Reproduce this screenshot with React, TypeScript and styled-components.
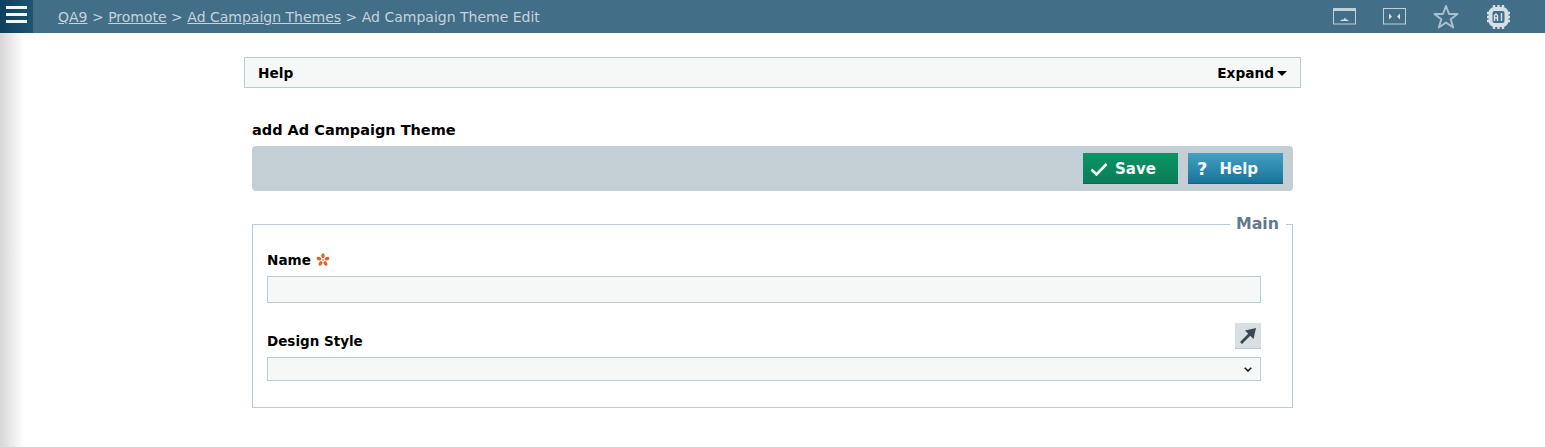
import React from 'react';
import { styled, createGlobalStyle } from 'styled-components';

const GlobalStyle = createGlobalStyle`
  html, body {
    margin: 0;
    padding: 0;
    background: #fff;
    font-family: 'DejaVu Sans', Verdana, sans-serif;
  }
  * {
    box-sizing: border-box;
  }
`;

const Page = styled.div`
  position: relative;
  height: 447px;
  overflow: hidden;

  &::after {
    content: '';
    position: absolute;
    left: 0;
    top: 33px;
    bottom: 0;
    width: 24px;
    background: linear-gradient(to right, #d6d6d6, #ffffff);
  }
`;

const TopBar = styled.header`
  display: flex;
  align-items: center;
  height: 33px;
  background: #436e87;
`;

const MenuButton = styled.div`
  display: flex;
  flex-direction: column;
  justify-content: flex-start;
  gap: 4px;
  width: 33px;
  height: 33px;
  padding: 6px 6px 0;
  background: linear-gradient(to right, #0d3f5e, #1d5472);

  span {
    display: block;
    height: 3px;
    background: #f2f6f8;
  }
`;

const Breadcrumbs = styled.nav`
  flex: 1;
  padding-left: 25px;
  margin-top: 1px;
  font-size: 14px;
  color: #c5d3dc;
  white-space: pre;

  a {
    color: #c5d3dc;
    text-decoration: underline;
  }
`;

const BarIcons = styled.div`
  display: flex;
  align-items: center;
  padding-right: 35px;
`;

const BarIcon = styled.svg<{ $gap?: number }>`
  display: block;
  margin-left: ${(p) => p.$gap ?? 0}px;
`;

const Content = styled.main`
  width: 1057px;
  margin: 0 auto;
  padding-top: 24px;
`;

const HelpPanel = styled.div`
  display: flex;
  align-items: center;
  justify-content: space-between;
  height: 31px;
  padding: 1px 13px 0;
  background: #f6f8f7;
  border: 1px solid #b5cdd6;
  font-size: 13.7px;
  font-weight: 700;
  color: #000;
`;

const Expand = styled.span`
  display: flex;
  align-items: center;
  gap: 3px;

  &::after {
    content: '';
    border-left: 5px solid transparent;
    border-right: 5px solid transparent;
    border-top: 5px solid #000;
    margin-top: 1px;
  }
`;

const FormArea = styled.div`
  padding: 0 8px;
`;

const Title = styled.h2`
  margin: 33px 0 0;
  height: 25px;
  font-size: 14.5px;
  line-height: 18px;
  font-weight: 700;
  color: #000;
`;

const Toolbar = styled.div`
  display: flex;
  justify-content: flex-end;
  align-items: flex-start;
  gap: 10px;
  height: 45px;
  padding: 7px 10px 0 0;
  background: #c4cfd5;
  border-radius: 4px;
`;

const ActionButton = styled.button<{ $tone: 'save' | 'help' }>`
  display: flex;
  align-items: center;
  width: 95px;
  height: 31px;
  padding: 1px 0 0 ${(p) => (p.$tone === 'save' ? 7 : 9)}px;
  gap: ${(p) => (p.$tone === 'save' ? 7 : 12)}px;
  border: none;
  border-bottom: 1px solid ${(p) => (p.$tone === 'save' ? '#0a6b4a' : '#17607f')};
  background: ${(p) =>
    p.$tone === 'save'
      ? 'linear-gradient(to bottom, #0a9565, #0b7d58)'
      : 'linear-gradient(to bottom, #45a1c2, #18739a)'};
  color: #f3f8f8;
  font-family: 'DejaVu Sans', Verdana, sans-serif;
  font-size: 15px;
  font-weight: 700;
`;

const QuestionMark = styled.span`
  font-size: 18px;
  line-height: 1;
`;

const Group = styled.fieldset`
  margin: 24px 0 0;
  height: 193px;
  padding: 0;
  border: 1px solid #b5cdd6;
  min-width: 0;
`;

const GroupLegend = styled.legend`
  margin-left: auto;
  margin-right: 6px;
  padding: 0 7px 0 6px;
  height: 18px;
  font-size: 15.8px;
  line-height: 18px;
  font-weight: 700;
  color: #66778a;
`;

const FieldStack = styled.div`
  padding: 18px 31px 0 14px;
`;

const FieldLabel = styled.label`
  display: flex;
  align-items: center;
  gap: 5px;
  height: 18px;
  font-size: 13.6px;
  font-weight: 700;
  color: #000;
`;

const StyleLabel = styled(FieldLabel)`
  margin-bottom: -1px;
  font-size: 13.5px;
`;

const TextInput = styled.input`
  display: block;
  width: 100%;
  height: 27px;
  margin-top: 7px;
  background: #f6f8f7;
  border: 1px solid #b5cdd6;
  outline: none;
`;

const StyleHead = styled.div`
  display: flex;
  align-items: flex-end;
  justify-content: space-between;
  height: 26px;
  margin-top: 20px;
`;

const JumpButton = styled.div`
  display: flex;
  align-items: center;
  justify-content: center;
  width: 26px;
  height: 26px;
  background: #d7dfe2;
  border-bottom: 1px solid #bcc8cc;
`;

const SelectBox = styled.select`
  display: block;
  width: 100%;
  height: 24px;
  margin-top: 8px;
  appearance: none;
  background-color: #f6f8f7;
  background-image: url("data:image/svg+xml,%3Csvg xmlns='http://www.w3.org/2000/svg' width='8' height='5'%3E%3Cpath d='M.7.7l3.300 3.300L7.300.7' fill='none' stroke='%23111' stroke-width='1.500'/%3E%3C/svg%3E");
  background-repeat: no-repeat;
  background-position: right 8px center;
  border: 1px solid #b5cdd6;
  border-radius: 0;
  outline: none;
`;

const App: React.FC = () => {
  return (
    <Page>
      <GlobalStyle />
      <TopBar>
        <MenuButton>
          <span />
          <span />
          <span />
        </MenuButton>
        <Breadcrumbs>
          <a href="#qa9">QA9</a>
          {' > '}
          <a href="#promote">Promote</a>
          {' > '}
          <a href="#themes">Ad Campaign Themes</a>
          {' > Ad Campaign Theme Edit'}
        </Breadcrumbs>
        <BarIcons>
          <BarIcon width="24" height="17" viewBox="0 0 24 17" fill="none">
            <rect x="0.5" y="0.5" width="22" height="15.500" stroke="#c0d0d9" />
            <rect x="0" y="0" width="23" height="3" fill="#c0d0d9" />
            <path d="M7 13h9l-2-1.500h-1l-1-2-1 2H9z" fill="#d8e2e8" />
          </BarIcon>
          <BarIcon $gap={26} width="24" height="17" viewBox="0 0 24 17" fill="none">
            <rect x="0.5" y="0.5" width="22" height="15.500" stroke="#c0d0d9" />
            <path d="M6 5.500v6l3-3zM17 5.500v6l-3-3z" fill="#d8e2e8" />
          </BarIcon>
          <BarIcon $gap={26} width="26" height="25" viewBox="0 0 26 25" fill="none">
            <path
              d="M13 2l3 8h8.500l-6.800 5.200 2.500 8.300-7.200-5-7.200 5 2.500-8.300L1.500 10H10z"
              stroke="#a9bfcc"
              strokeWidth="2"
              strokeLinejoin="round"
            />
          </BarIcon>
          <BarIcon $gap={28} width="23" height="24" viewBox="0 0 23 24" fill="none">
            <rect x="3.500" y="4" width="16" height="16" rx="4" stroke="#d5e0e6" strokeWidth="4" fill="#436e87" />
            <path
              d="M7 0v3M11.500 0v3M16 0v3M7 21v3M11.500 21v3M16 21v3M0 8h3M0 12h3M0 16h3M20 8h3M20 12h3M20 16h3"
              stroke="#d5e0e6"
              strokeWidth="2.400"
            />
            <path d="M7.500 16v-5.500l1.500-1.500 1.500 1.500V16M7.500 13h3M14.500 8v8" stroke="#d5e0e6" strokeWidth="1.500" />
          </BarIcon>
        </BarIcons>
      </TopBar>

      <Content>
        <HelpPanel>
          <span>Help</span>
          <Expand>Expand</Expand>
        </HelpPanel>

        <FormArea>
          <Title>add Ad Campaign Theme</Title>
          <Toolbar>
            <ActionButton $tone="save">
              <svg width="18" height="14" viewBox="0 0 18 14" fill="none">
                <path d="M1.500 7.500l5 5L16.500 2" stroke="#f3f8f8" strokeWidth="2.600" />
              </svg>
              Save
            </ActionButton>
            <ActionButton $tone="help">
              <QuestionMark>?</QuestionMark>
              Help
            </ActionButton>
          </Toolbar>

          <Group>
            <GroupLegend>Main</GroupLegend>
            <FieldStack>
              <FieldLabel htmlFor="theme-name">
                Name
                <svg width="14" height="14" viewBox="0 0 14 14" fill="#e2622c">
                  {[0, 72, 144, 216, 288].map((angle) => (
                    <ellipse key={angle} cx="7" cy="2.800" rx="1.700" ry="2.500" transform={`rotate(${angle} 7 7)`} />
                  ))}
                  <circle cx="7" cy="7" r="1.200" fill="#f4b193" />
                </svg>
              </FieldLabel>
              <TextInput id="theme-name" />
              <StyleHead>
                <StyleLabel htmlFor="design-style">Design Style</StyleLabel>
                <JumpButton>
                  <svg width="18" height="18" viewBox="0 0 18 18" fill="none">
                    <path d="M2 16L11 7" stroke="#3c4650" strokeWidth="2.800" />
                    <path d="M6 3.500L17 1l-2.500 11z" fill="#3c4650" />
                  </svg>
                </JumpButton>
              </StyleHead>
              <SelectBox id="design-style" />
            </FieldStack>
          </Group>
        </FormArea>
      </Content>
    </Page>
  );
};

export default App;
